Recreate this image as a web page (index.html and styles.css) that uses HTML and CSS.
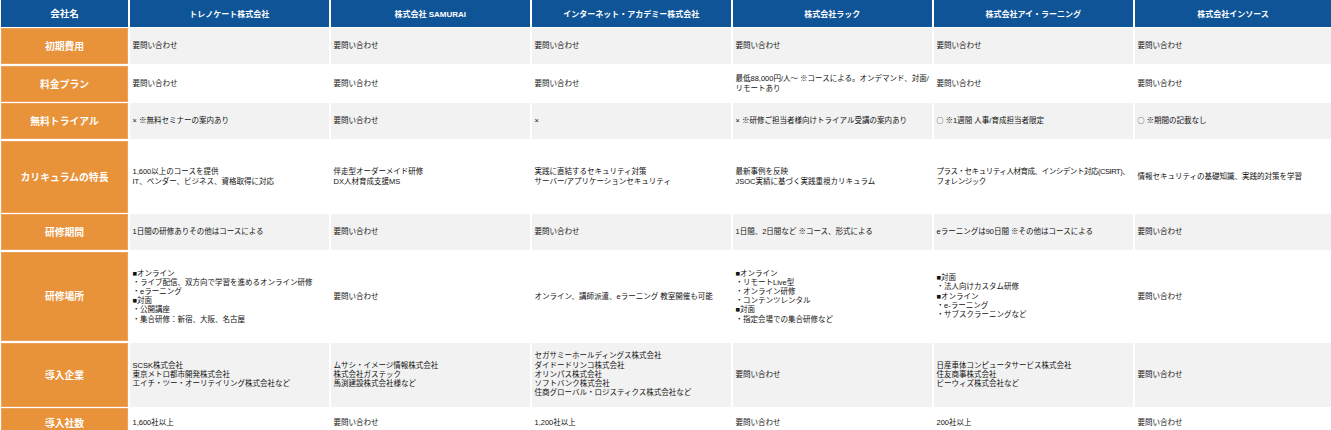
FILE: index.html
```html
<!DOCTYPE html>
<html lang="ja">
<head>
<meta charset="utf-8">
<link rel="stylesheet" href="styles.css">
</head>
<body>
<div class="cmp">
  <div class="hd hd-first">会社名</div>
  <div class="hd">トレノケート株式会社</div>
  <div class="hd">株式会社 SAMURAI</div>
  <div class="hd">インターネット・アカデミー株式会社</div>
  <div class="hd">株式会社ラック</div>
  <div class="hd">株式会社アイ・ラーニング</div>
  <div class="hd">株式会社インソース</div>

  <div class="lb">初期費用</div>
  <div class="c g">要問い合わせ</div>
  <div class="c g">要問い合わせ</div>
  <div class="c g">要問い合わせ</div>
  <div class="c g">要問い合わせ</div>
  <div class="c g">要問い合わせ</div>
  <div class="c g">要問い合わせ</div>

  <div class="lb">料金プラン</div>
  <div class="c">要問い合わせ</div>
  <div class="c">要問い合わせ</div>
  <div class="c">要問い合わせ</div>
  <div class="c">最低88,000円/人～ ※コースによる。オンデマンド、対面/<br>リモートあり</div>
  <div class="c">要問い合わせ</div>
  <div class="c">要問い合わせ</div>

  <div class="lb">無料トライアル</div>
  <div class="c g">× ※無料セミナーの案内あり</div>
  <div class="c g">要問い合わせ</div>
  <div class="c g">×</div>
  <div class="c g">× ※研修ご担当者様向けトライアル受講の案内あり</div>
  <div class="c g"><span class="mark">○</span>&nbsp;※1週間 人事/育成担当者限定</div>
  <div class="c g"><span class="mark">○</span>&nbsp;※期間の記載なし</div>

  <div class="lb">カリキュラムの特長</div>
  <div class="c">1,600以上のコースを提供<br>IT、ベンダー、ビジネス、資格取得に対応</div>
  <div class="c">伴走型オーダーメイド研修<br>DX人材育成支援MS</div>
  <div class="c">実践に直結するセキュリティ対策<br>サーバー/アプリケーションセキュリティ</div>
  <div class="c">最新事例を反映<br>JSOC実績に基づく実践重視カリキュラム</div>
  <div class="c tight">プラス・セキュリティ人材育成、インシデント対応(CSIRT)、<br>フォレンジック</div>
  <div class="c">情報セキュリティの基礎知識、実践的対策を学習</div>

  <div class="lb">研修期間</div>
  <div class="c g">1日間の研修ありその他はコースによる</div>
  <div class="c g">要問い合わせ</div>
  <div class="c g">要問い合わせ</div>
  <div class="c g">1日間、2日間など ※コース、形式による</div>
  <div class="c g">eラーニングは90日間 ※その他はコースによる</div>
  <div class="c g">要問い合わせ</div>

  <div class="lb">研修場所</div>
  <div class="c">■オンライン<br>・ライブ配信、双方向で学習を進めるオンライン研修<br>・eラーニング<br>■対面<br>・公開講座<br>・集合研修：新宿、大阪、名古屋</div>
  <div class="c">要問い合わせ</div>
  <div class="c">オンライン、講師派遣、eラーニング 教室開催も可能</div>
  <div class="c">■オンライン<br>・リモートLive型<br>・オンライン研修<br>・コンテンツレンタル<br>■対面<br>・指定会場での集合研修など</div>
  <div class="c">■対面<br>・法人向けカスタム研修<br>■オンライン<br>・e-ラーニング<br>・サブスクラーニングなど</div>
  <div class="c">要問い合わせ</div>

  <div class="lb">導入企業</div>
  <div class="c g">SCSK株式会社<br>東京メトロ都市開発株式会社<br>エイチ・ツー・オーリテイリング株式会社など</div>
  <div class="c g">ムサシ・イメージ情報株式会社<br>株式会社ガステック<br>馬渕建設株式会社様など</div>
  <div class="c g">セガサミーホールディングス株式会社<br>ダイドードリンコ株式会社<br>オリンパス株式会社<br>ソフトバンク株式会社<br>住商グローバル・ロジスティクス株式会社など</div>
  <div class="c g">要問い合わせ</div>
  <div class="c g">日産車体コンピュータサービス株式会社<br>住友商事株式会社<br>ビーウィズ株式会社など</div>
  <div class="c g">要問い合わせ</div>

  <div class="lb">導入社数</div>
  <div class="c">1,600社以上</div>
  <div class="c">要問い合わせ</div>
  <div class="c">1,200社以上</div>
  <div class="c">要問い合わせ</div>
  <div class="c">200社以上</div>
  <div class="c">要問い合わせ</div>
</div>
</body>
</html>
```
FILE: styles.css
```css
html, body {
  margin: 0;
  padding: 0;
  background: #ffffff;
}

body {
  font-family: "Liberation Sans", "Noto Sans CJK JP", sans-serif;
  color: #111111;
  overflow: hidden;
}

.cmp {
  display: grid;
  width: 1331px;
  box-sizing: border-box;
  padding-left: 1px;
  grid-template-columns: 127px 199.5px 199.5px 199.5px 199.5px 199.5px 197px;
  grid-template-rows: 26.5px 36px 36px 36px 72px 36px 89.5px 64px 30px;
  gap: 1.5px;
  background: #ffffff;
}

.hd {
  background: #0f5497;
  color: #ffffff;
  font-weight: bold;
  font-size: 8px;
  display: flex;
  align-items: center;
  justify-content: center;
  text-align: center;
}

.hd-first {
  font-size: 9.5px;
}

.lb {
  background: #e8923a;
  color: #ffffff;
  font-weight: bold;
  font-size: 9.8px;
  display: flex;
  align-items: center;
  justify-content: center;
  text-align: center;
  box-shadow: inset 0 0 0 1px #eda15a;
}

.c {
  background: #ffffff;
  font-size: 7.5px;
  line-height: 9.2px;
  display: flex;
  align-items: center;
  padding: 0 3px;
  overflow: hidden;
}

.c.g {
  background: #f2f2f2;
}

.c.tight {
  white-space: nowrap;
  letter-spacing: -0.45px;
}

.mark {
  font-family: "Noto Sans CJK JP", sans-serif;
  font-size: 7px;
  line-height: 9.2px;
}
```
